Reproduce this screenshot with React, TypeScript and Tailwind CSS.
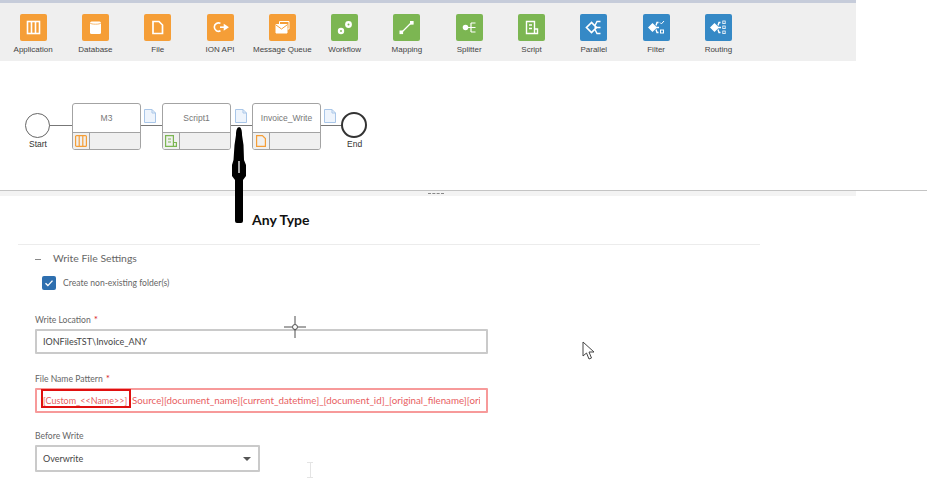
import type { ReactNode } from "react";

const labelFont = "font-['Liberation_Sans',sans-serif]";
const formFont = "font-['Lato',sans-serif]";

const paths = {
  application: (
    <g fill="none" stroke="#fff" strokeWidth="1.6">
      <rect x="7.5" y="7.5" width="12" height="12" />
      <path d="M11.5 7.5v12M15.5 7.5v12" />
    </g>
  ),
  database: (
    <g fill="#fff">
      <rect x="8" y="7.5" width="11" height="12.5" rx="1.5" />
      <path d="M8 9c1 1.6 10 1.6 11 0" fill="none" stroke="#f59e37" strokeWidth="0.7" />
    </g>
  ),
  file: <path d="M9 7.5h6l3.5 3.5v8.5H9z" fill="none" stroke="#fff" strokeWidth="1.7" />,
  api: (
    <g fill="none" stroke="#fff" strokeWidth="1.6">
      <path d="M13.5 9.4a4.2 4.2 0 1 0 0 7.4" />
      <path d="M13 13.2h5" />
      <path d="M17.5 11.2l3 2-3 2z" fill="#fff" />
    </g>
  ),
  queue: (
    <g fill="none" stroke="#fff" strokeWidth="1">
      <path d="M10.5 10V7.5h9.5v7.5h-1.5" />
      <path d="M7 10.5h11v8.5H7z" fill="#fff" />
      <path d="M7 11l5.5 4 5.5-4" stroke="#f59e37" />
    </g>
  ),
  workflow: (
    <g fill="#fff">
      <circle cx="10" cy="17" r="3.2" />
      <circle cx="17.5" cy="10.5" r="3.4" />
      <circle cx="10" cy="17" r="0.9" fill="#7cb652" />
      <circle cx="17.5" cy="10.5" r="1" fill="#7cb652" />
    </g>
  ),
  mapping: (
    <g fill="#fff" stroke="#fff">
      <path d="M9 18l9-9" strokeWidth="1.3" />
      <rect x="7" y="17" width="2.6" height="2.6" />
      <rect x="17.5" y="7.5" width="2.6" height="2.6" />
    </g>
  ),
  splitter: (
    <g fill="none" stroke="#fff" strokeWidth="1.2">
      <circle cx="9.5" cy="13.5" r="2.2" fill="#fff" />
      <path d="M10 13.5h9.5M15 9h4.5M15 18h4.5M15 9v9" />
    </g>
  ),
  script: (
    <g fill="none" stroke="#fff" strokeWidth="1.4">
      <path d="M8.5 7.5h8v12h-8zM16.5 15h3v4.5h-3" />
      <path d="M11 11h3M11 14.5h3" />
    </g>
  ),
  parallel: (
    <g fill="none" stroke="#fff" strokeWidth="1.7">
      <path d="M11.5 8.5l-5 5 5 5 5-5z" />
      <path d="M20.5 7.5h-3.5l-2 4M20.5 19.5h-3.5l-2-4M14.5 13.5h6" strokeWidth="1.4" />
    </g>
  ),
  filter: (
    <g fill="none" stroke="#fff" strokeWidth="1.4">
      <path d="M9.5 10l-3.5 3.5 3.5 3.5 3.5-3.5z" fill="#fff" />
      <path d="M15.5 8.5h-1.5l-1 3M15.5 18.5h-1.5l-1-3M13 13.5h3" />
      <path d="M17 8.5l1.4 1.4L21 7" strokeWidth="1" />
      <rect x="17.5" y="16" width="3" height="3" strokeWidth="1" />
    </g>
  ),
  routing: (
    <g fill="none" stroke="#fff" strokeWidth="1.4">
      <path d="M9.5 10l-3.5 3.5 3.5 3.5 3.5-3.5z" fill="#fff" />
      <path d="M15.5 8.5h-1.5l-1 3M15.5 18.5h-1.5l-1-3M13 13.5h3" />
      <rect x="17.8" y="7" width="2.4" height="2.6" strokeWidth="0.8" />
      <rect x="17.8" y="12" width="2.4" height="2.6" strokeWidth="0.8" />
      <rect x="17.8" y="17" width="2.4" height="2.6" strokeWidth="0.8" />
    </g>
  ),
};

const tools = [
  { label: "Application", color: "bg-[#f59e37]", icon: paths.application },
  { label: "Database", color: "bg-[#f59e37]", icon: paths.database },
  { label: "File", color: "bg-[#f59e37]", icon: paths.file },
  { label: "ION API", color: "bg-[#f59e37]", icon: paths.api },
  { label: "Message Queue", color: "bg-[#f59e37]", icon: paths.queue },
  { label: "Workflow", color: "bg-[#7cb652]", icon: paths.workflow },
  { label: "Mapping", color: "bg-[#7cb652]", icon: paths.mapping },
  { label: "Splitter", color: "bg-[#7cb652]", icon: paths.splitter },
  { label: "Script", color: "bg-[#7cb652]", icon: paths.script },
  { label: "Parallel", color: "bg-[#3589c6]", icon: paths.parallel },
  { label: "Filter", color: "bg-[#3589c6]", icon: paths.filter },
  { label: "Routing", color: "bg-[#3589c6]", icon: paths.routing },
];

function Toolbar() {
  return (
    <div className="w-[856px] h-[61px] bg-[#efefef] border-t-[3px] border-[#c6ccda] pl-[2px] pt-[11px] flex">
      {tools.map((t) => (
        <div key={t.label} className="w-[62.3px] flex flex-col items-center shrink-0">
          <div className={`w-[27px] h-[27px] rounded-[2px] ${t.color}`}>
            <svg width="27" height="27" viewBox="0 0 27 27">
              {t.icon}
            </svg>
          </div>
          <span className={`mt-[3px] text-[8px] leading-[11px] text-[#444] whitespace-nowrap ${labelFont}`}>
            {t.label}
          </span>
        </div>
      ))}
    </div>
  );
}

function DocIcon({ left }: { left: number }) {
  return (
    <svg className="absolute top-[109px]" style={{ left }} width="12" height="14" viewBox="0 0 12 14">
      <path d="M.5.5h7.5l3.5 3.5v9.5H.5z" fill="#eef4fc" stroke="#a9c6e8" />
      <path d="M8 .5V4h3.5" fill="none" stroke="#a9c6e8" />
    </svg>
  );
}

function FlowNode({ left, name, icon }: { left: number; name: string; icon: ReactNode }) {
  return (
    <div
      className={`absolute top-[103px] w-[69px] h-[47px] bg-white border border-[#a3a3a3] rounded-[3px] flex flex-col overflow-hidden ${labelFont}`}
      style={{ left }}
    >
      <div className="h-[29px] flex items-center justify-center text-[8.5px] text-[#777] border-b border-[#a3a3a3]">
        {name}
      </div>
      <div className="flex-1 flex bg-[#f0f0f0]">
        <div className="w-[17px] border-r border-[#a3a3a3] flex items-center justify-center">{icon}</div>
      </div>
    </div>
  );
}

function Diagram() {
  return (
    <div className="relative h-[130px] border-b border-[#c4c4c4]">
      {/* the canvas is offset so nodes can use page y coordinates */}
      <div className="absolute left-0 top-[-61px] w-[856px] h-[191px]">
        <div className="absolute left-[49px] top-[125px] w-[293px] h-px bg-[#777]" />
        <div className="absolute left-[25px] top-[113px] w-[25px] h-[25px] rounded-full border border-[#666] bg-white" />
        <span className={`absolute left-[29px] top-[139px] text-[8.5px] leading-[11px] text-[#333] ${labelFont}`}>Start</span>
        <FlowNode
          left={72}
          name="M3"
          icon={
            <svg width="12" height="12" viewBox="0 0 12 12" fill="none" stroke="#f59e37" strokeWidth="1.2">
              <rect x=".6" y=".6" width="10.8" height="10.8" rx="1" />
              <path d="M4.2 .6v10.8M7.8 .6v10.8" />
            </svg>
          }
        />
        <DocIcon left={144} />
        <FlowNode
          left={162}
          name="Script1"
          icon={
            <svg width="12" height="12" viewBox="0 0 12 12" fill="none" stroke="#7cb652" strokeWidth="1.2">
              <path d="M.6.6h7.8v10.8H.6zM8.4 7.5h3v3.9h-3M3 4h3M3 7h3" />
            </svg>
          }
        />
        <DocIcon left={235} />
        <FlowNode
          left={252}
          name="Invoice_Write"
          icon={
            <svg width="10" height="12" viewBox="0 0 10 12" fill="none" stroke="#f59e37" strokeWidth="1.2">
              <path d="M.6.6h5.8l3 3v7.8H.6z" />
            </svg>
          }
        />
        <DocIcon left={324} />
        <div className="absolute left-[341px] top-[112px] w-[26px] h-[26px] rounded-full border-2 border-[#333] bg-white" />
        <span className={`absolute left-[347px] top-[139px] text-[8.5px] leading-[11px] text-[#333] ${labelFont}`}>End</span>
      </div>
    </div>
  );
}

function Field({ label, required, children }: { label: string; required?: boolean; children: ReactNode }) {
  return (
    <div>
      <div className={`text-[8.6px] leading-[12px] text-[#666] ${formFont}`}>
        {label}
        {required && <span className="ml-[3px] text-[10px] text-[#d9252b]">*</span>}
      </div>
      {children}
    </div>
  );
}

export default function App() {
  return (
    <div className="relative w-[927px] h-[501px] bg-white overflow-hidden">
      <Toolbar />
      <Diagram />

      <div className="h-[5px] w-[856px] bg-[#f3f3f3] pt-[2px]">
        <div className="ml-[428px] w-[16px] border-t border-dashed border-[#888]" />
      </div>

      <div className="mx-[18px] mt-[48px] w-[742px] border-t border-[#ececec] pl-[17px] pt-[7px]">
        <div className={`flex items-center h-[14px] text-[10.4px] text-[#666] ${formFont}`}>
          <span className="w-[6px] h-px bg-[#888] mr-[12px]" />
          Write File Settings
        </div>
        <div className="flex items-center mt-[10px] ml-[7px]">
          <span className="w-[14px] h-[14px] rounded-[2px] bg-[#2e6faf] flex items-center justify-center">
            <svg width="10" height="10" viewBox="0 0 10 10" fill="none" stroke="#fff" strokeWidth="1.4">
              <path d="M1.5 5.2l2.4 2.4 4.6-5" />
            </svg>
          </span>
          <span className={`ml-[7px] text-[8.6px] text-[#666] ${formFont}`}>Create non-existing folder(s)</span>
        </div>

        <div className="mt-[23px] w-[453px] flex flex-col">
          <Field label="Write Location" required>
            <div className={`mt-[3px] h-[25px] border-2 border-[#cacaca] rounded-[1px] px-[6px] flex items-center text-[9px] text-[#444] ${formFont}`}>
              IONFilesTST\Invoice_ANY
            </div>
          </Field>
          <div className="mt-[18px]">
            <Field label="File Name Pattern" required>
              <div className={`mt-[3px] h-[25px] border-2 border-[#f79a9a] rounded-[1px] pl-[6px] pr-[6px] flex items-center text-[9.75px] text-[#e8605f] whitespace-nowrap ${formFont}`}>
                <span className="min-w-0 overflow-hidden">
                  <span className="inline-block w-[89px] text-[9px]">[Custom_&lt;&lt;Name&gt;&gt;]</span>
                  Source][document_name][current_datetime]_[document_id]_[original_filename][original_extension]
                </span>
              </div>
            </Field>
          </div>
          <div className="w-[225px] mt-[17px]">
            <Field label="Before Write">
              <div className={`mt-[3px] h-[27px] border-2 border-[#cacaca] rounded-[1px] px-[6px] flex items-center justify-between text-[9px] text-[#444] ${formFont}`}>
                Overwrite
                <span className="w-0 h-0 mr-[1px] border-x-[4px] border-x-transparent border-t-[4px] border-t-[#555]" />
              </div>
            </Field>
          </div>
        </div>
      </div>

      {/* annotations pasted over the screenshot */}
      <svg className="absolute left-[230px] top-[125px]" width="20" height="102" viewBox="0 0 20 102">
        <path d="M9 2c2 0 3 3 3 8l1.5 10 .5 15 2 5v11l-3 4v41a2 2 0 0 1-2 2H7a2 2 0 0 1-2-2V55l-3-4V40l1.5-5 1-15 1.5-10c0-5 1-8 3.5-8z" fill="#000" />
        <path d="M9 36v12" stroke="#fff" strokeWidth="1.3" />
      </svg>
      <span className="absolute left-[252px] top-[211px] text-[14px] leading-[17px] font-bold text-[#111] font-['Lato',sans-serif]">
        Any Type
      </span>
      <div className="absolute left-[41px] top-[389px] w-[90px] h-[19px] border-2 border-[#e01010]" />

      <svg className="absolute left-[284px] top-[316px]" width="22" height="22" viewBox="0 0 22 22" fill="none" stroke="#222">
        <circle cx="11" cy="11" r="2.5" strokeWidth="0.8" />
        <path d="M11 0v8M11 14v8M0 11h8M14 11h8" strokeWidth="0.8" />
      </svg>
      <svg className="absolute left-[582px] top-[341px]" width="14" height="20" viewBox="0 0 14 20">
        <path d="M1 1v14l3.5-3 2.5 6 2.5-1-2.5-6H12z" fill="#fff" stroke="#444" />
      </svg>
      <svg className="absolute left-[307px] top-[462px]" width="7" height="16" viewBox="0 0 7 16" fill="none" stroke="#e4e4e4">
        <path d="M0 .5h6M3.5 .5v15M0 15.5h6" />
      </svg>
    </div>
  );
}
